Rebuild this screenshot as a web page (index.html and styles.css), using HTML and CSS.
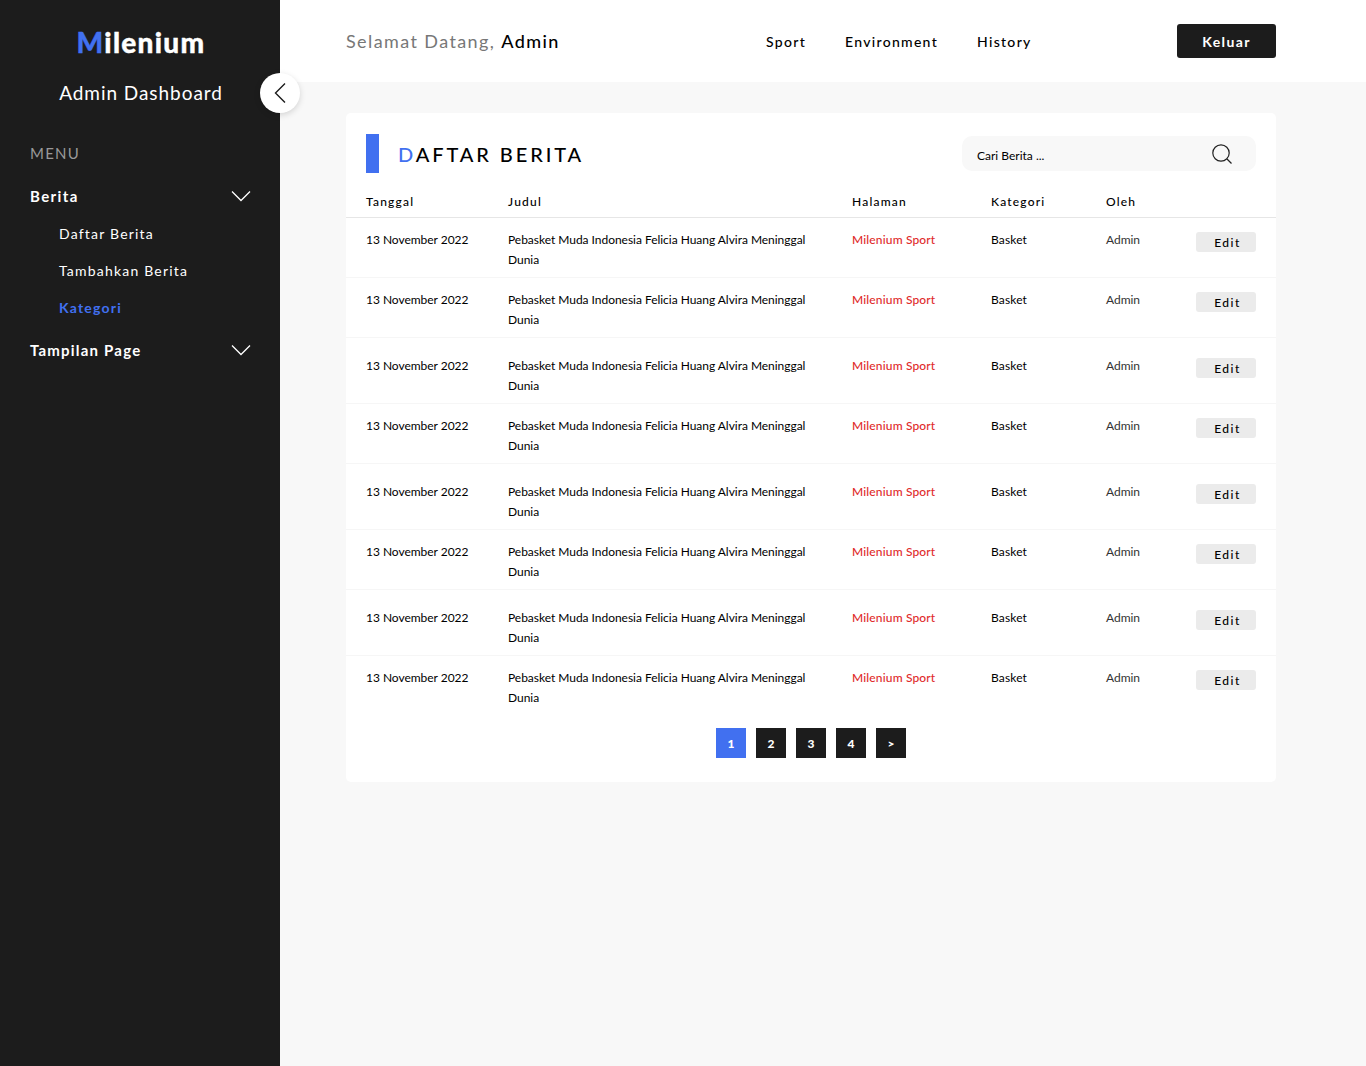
FILE: index.html
```html
<!DOCTYPE html>
<html lang="id">
<head>
  <meta charset="UTF-8">
  <title>Admin Dashboard</title>
  <link rel="stylesheet" href="styles.css">
</head>
<body>
  <div class="layout">
    <aside class="sidebar">
      <div class="logo"><span class="accent">M</span>ilenium</div>
      <div class="subtitle">Admin Dashboard</div>
      <button class="collapse">
        <svg width="14" height="22" viewBox="0 0 14 22"><path d="M12 1.5 2.5 11 12 20.5" fill="none" stroke="#1c1c1c" stroke-width="1.4"/></svg>
      </button>
      <div class="menu-label">MENU</div>
      <div class="menu-head menu-first">
        <span>Berita</span>
        <svg width="20" height="12" viewBox="0 0 20 12"><path d="M1 1.5 10 10.5 19 1.5" fill="none" stroke="#fff" stroke-width="1.3"/></svg>
      </div>
      <a class="menu-item">Daftar Berita</a>
      <a class="menu-item">Tambahkan Berita</a>
      <a class="menu-item active">Kategori</a>
      <div class="menu-head menu-second">
        <span>Tampilan Page</span>
        <svg width="20" height="12" viewBox="0 0 20 12"><path d="M1 1.5 10 10.5 19 1.5" fill="none" stroke="#fff" stroke-width="1.3"/></svg>
      </div>
    </aside>

    <main class="main">
      <header class="topbar">
        <div class="welcome">Selamat Datang, <b>Admin</b></div>
        <nav class="topnav">
          <a>Sport</a>
          <a>Environment</a>
          <a>History</a>
        </nav>
        <button class="logout">Keluar</button>
      </header>

      <section class="card">
        <div class="card-head">
          <div class="title-bar"></div>
          <h1 class="title"><span class="accent">D</span>AFTAR BERITA</h1>
          <div class="search">
            <span class="search-text">Cari Berita ...</span>
            <svg width="22" height="22" viewBox="0 0 22 22"><circle cx="10" cy="10" r="8.2" fill="none" stroke="#222" stroke-width="1.2"/><path d="M16 16 20.5 20.5" stroke="#222" stroke-width="1.2"/></svg>
          </div>
        </div>

        <table class="news">
          <thead>
            <tr><th>Tanggal</th><th>Judul</th><th>Halaman</th><th>Kategori</th><th>Oleh</th><th></th></tr>
          </thead>
          <tbody>
            <tr>
              <td>13 November 2022</td>
              <td>Pebasket Muda Indonesia Felicia Huang Alvira Meninggal Dunia</td>
              <td class="page-name">Milenium Sport</td>
              <td class="category">Basket</td>
              <td class="author">Admin</td>
              <td><button class="edit">Edit</button></td>
            </tr>
            <tr>
              <td>13 November 2022</td>
              <td>Pebasket Muda Indonesia Felicia Huang Alvira Meninggal Dunia</td>
              <td class="page-name">Milenium Sport</td>
              <td class="category">Basket</td>
              <td class="author">Admin</td>
              <td><button class="edit">Edit</button></td>
            </tr>
            <tr class="tall">
              <td>13 November 2022</td>
              <td>Pebasket Muda Indonesia Felicia Huang Alvira Meninggal Dunia</td>
              <td class="page-name">Milenium Sport</td>
              <td class="category">Basket</td>
              <td class="author">Admin</td>
              <td><button class="edit">Edit</button></td>
            </tr>
            <tr>
              <td>13 November 2022</td>
              <td>Pebasket Muda Indonesia Felicia Huang Alvira Meninggal Dunia</td>
              <td class="page-name">Milenium Sport</td>
              <td class="category">Basket</td>
              <td class="author">Admin</td>
              <td><button class="edit">Edit</button></td>
            </tr>
            <tr class="tall">
              <td>13 November 2022</td>
              <td>Pebasket Muda Indonesia Felicia Huang Alvira Meninggal Dunia</td>
              <td class="page-name">Milenium Sport</td>
              <td class="category">Basket</td>
              <td class="author">Admin</td>
              <td><button class="edit">Edit</button></td>
            </tr>
            <tr>
              <td>13 November 2022</td>
              <td>Pebasket Muda Indonesia Felicia Huang Alvira Meninggal Dunia</td>
              <td class="page-name">Milenium Sport</td>
              <td class="category">Basket</td>
              <td class="author">Admin</td>
              <td><button class="edit">Edit</button></td>
            </tr>
            <tr class="tall">
              <td>13 November 2022</td>
              <td>Pebasket Muda Indonesia Felicia Huang Alvira Meninggal Dunia</td>
              <td class="page-name">Milenium Sport</td>
              <td class="category">Basket</td>
              <td class="author">Admin</td>
              <td><button class="edit">Edit</button></td>
            </tr>
            <tr class="last">
              <td>13 November 2022</td>
              <td>Pebasket Muda Indonesia Felicia Huang Alvira Meninggal Dunia</td>
              <td class="page-name">Milenium Sport</td>
              <td class="category">Basket</td>
              <td class="author">Admin</td>
              <td><button class="edit">Edit</button></td>
            </tr>
          </tbody>
        </table>

        <div class="pagination">
          <a class="current">1</a>
          <a>2</a>
          <a>3</a>
          <a>4</a>
          <a>&gt;</a>
        </div>
      </section>
    </main>
  </div>
</body>
</html>
```

FILE: styles.css
```css
* {
  box-sizing: border-box;
}
body {
  margin: 0;
  font-family: 'Lato', sans-serif;
  background-color: #f8f8f8;
  color: #000;
}
.layout {
  display: flex;
  min-height: 1066px;
}
.accent {
  color: #4170f0;
}

/* sidebar */
.sidebar {
  position: relative;
  width: 280px;
  flex-shrink: 0;
  padding: 24px 30px 0;
  background: #1c1c1c;
  color: #fff;
}
.logo {
  height: 36px;
  padding-left: 2px;
  font-size: 28px;
  line-height: 36px;
  font-weight: 900;
  letter-spacing: 1.3px;
  text-align: center;
  -webkit-text-stroke: 0.4px currentColor;
}
.subtitle {
  margin-top: 20px;
  padding-left: 2px;
  font-size: 19px;
  line-height: 26px;
  letter-spacing: 0.95px;
  text-align: center;
}
.collapse {
  position: absolute;
  top: 73px;
  right: -20px;
  display: flex;
  align-items: center;
  justify-content: center;
  width: 40px;
  height: 40px;
  padding: 0;
  border: none;
  border-radius: 50%;
  background: #fff;
  box-shadow: 0 2px 6px rgba(0,0,0,0.15);
}
.menu-label {
  margin-top: 35px;
  font-size: 15px;
  line-height: 24px;
  letter-spacing: 1.2px;
  color: #999;
}
.menu-head {
  display: flex;
  justify-content: space-between;
  align-items: center;
  font-size: 15px;
  line-height: 24px;
  font-weight: 700;
  letter-spacing: 1.2px;
}
.menu-head svg {
  margin-right: -1px;
}
.menu-first {
  margin-top: 19px;
  margin-bottom: 13px;
  letter-spacing: 1.4px;
}
.menu-second {
  margin-top: 6px;
}
.menu-item {
  display: block;
  height: 37px;
  padding-left: 29px;
  font-size: 14px;
  line-height: 26px;
  letter-spacing: 1.2px;
}
.menu-item.active {
  color: #4170f0;
  font-weight: 700;
}

/* top bar */
.main {
  flex: 1;
  min-width: 0;
}
.topbar {
  display: flex;
  align-items: center;
  height: 82px;
  padding: 0 90px 0 66px;
  background: #fff;
}
.welcome {
  width: 420px;
  margin-bottom: 1px;
  font-size: 18px;
  letter-spacing: 1.4px;
  color: #777;
}
.welcome b {
  font-weight: 500;
  color: #000;
}
.topnav {
  display: flex;
  gap: 39px;
  font-size: 14px;
  font-weight: 500;
  letter-spacing: 1.3px;
}
.logout {
  width: 99px;
  height: 34px;
  margin-left: auto;
  border: none;
  border-radius: 3px;
  background: #1c1c1c;
  color: #fff;
  font-family: inherit;
  font-size: 14px;
  font-weight: 700;
  letter-spacing: 1.4px;
}

/* card */
.card {
  width: 930px;
  height: 669px;
  margin: 31px 0 0 66px;
  border-radius: 5px;
  background: #fff;
}
.card-head {
  display: flex;
  align-items: center;
  height: 81px;
  padding: 0 20px;
}
.title-bar {
  width: 13px;
  height: 39px;
  background: #4170f0;
}
.title {
  margin: 0 0 0 19px;
  font-size: 20px;
  font-weight: 500;
  letter-spacing: 2.9px;
}
.search {
  display: flex;
  justify-content: space-between;
  align-items: center;
  width: 294px;
  height: 35px;
  margin-left: auto;
  padding: 0 23px 0 15px;
  border-radius: 10px;
  background: #f8f8f8;
  font-size: 12px;
}
.search-text {
  padding-top: 4px;
}

/* table */
.news {
  width: 100%;
  border-collapse: collapse;
  table-layout: fixed;
}
.news th {
  height: 23px;
  padding: 0 0 7px 0;
  border-bottom: 1px solid #e6e6e6;
  font-size: 12px;
  line-height: 16px;
  font-weight: 500;
  letter-spacing: 1.2px;
  text-align: left;
}
.news th:nth-child(1) { width: 162px; padding-left: 20px; }
.news th:nth-child(2) { width: 344px; }
.news th:nth-child(3) { width: 139px; }
.news th:nth-child(4) { width: 115px; }
.news th:nth-child(5) { width: 90px; }
.news td {
  height: 59px;
  padding: 12px 0 7px;
  border-bottom: 1px solid #f6f6f6;
  font-size: 12px;
  line-height: 20px;
  letter-spacing: -0.03px;
  vertical-align: top;
}
.news td:first-child {
  padding-left: 20px;
}
.news td:nth-child(2) {
  padding-right: 30px;
}
.news tr.tall td {
  height: 65px;
  padding-top: 18px;
}
.news tr.last td {
  border-bottom: none;
}
.news td.page-name {
  color: #e02b2b;
  font-weight: 500;
  letter-spacing: 0.15px;
}
.news td.category {
  letter-spacing: 0.15px;
}
.author {
  color: #333;
}
.edit {
  display: block;
  width: 60px;
  height: 20px;
  margin-top: 2px;
  padding: 0 0 0 3px;
  border: none;
  border-radius: 3px;
  background: #ebebeb;
  font-family: inherit;
  font-size: 12px;
  font-weight: 500;
  letter-spacing: 1.5px;
}

/* pagination */
.pagination {
  display: flex;
  justify-content: center;
  gap: 10px;
  margin-top: 13px;
}
.pagination a {
  width: 30px;
  height: 30px;
  background: #1c1c1c;
  color: #fff;
  font-size: 12px;
  font-weight: 900;
  line-height: 32px;
  text-align: center;
}
.pagination a.current {
  background: #4170f0;
}
```
